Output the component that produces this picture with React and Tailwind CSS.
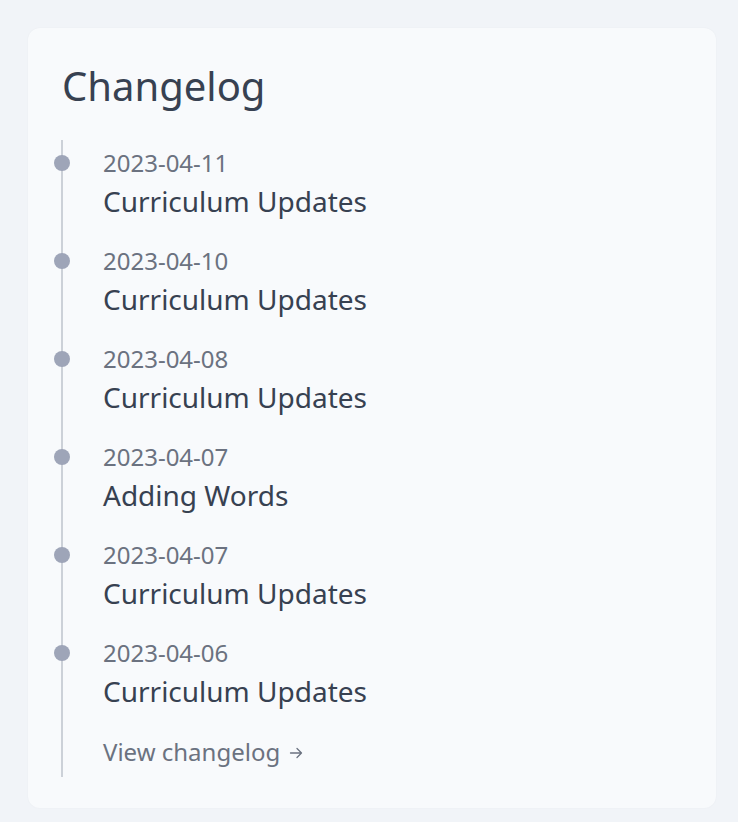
const entries = [
  { date: '2023-04-11', title: 'Curriculum Updates' },
  { date: '2023-04-10', title: 'Curriculum Updates' },
  { date: '2023-04-08', title: 'Curriculum Updates' },
  { date: '2023-04-07', title: 'Adding Words' },
  { date: '2023-04-07', title: 'Curriculum Updates' },
  { date: '2023-04-06', title: 'Curriculum Updates' },
]

export default function App() {
  return (
    <div className="min-h-screen bg-[#f1f4f8] pt-[28px] pl-[28px]"
      style={{ fontFamily: '"Noto Sans", "Open Sans", sans-serif' }}>
      <div className="w-[688px] rounded-xl bg-[#f8fafc] pt-[34px] pb-[31px] px-[33px] shadow-[0_0_2px_rgba(15,23,42,0.04)]">
        <h2 className="text-[40px] leading-[48px] text-[#374151] pl-[1px]">Changelog</h2>

        <div className="mt-[30px] border-l-2 border-[#ccd1d8] pt-[8px] pb-[10px] pl-[40px]">
          <ul className="flex flex-col gap-[27px]">
            {entries.map((e, i) => (
              <li key={i} className="relative">
                <span className="absolute left-[-49px] top-[7px] w-4 h-4 rounded-full bg-[#9ea5b8]" />
                <div className="text-[24px] leading-[30px] text-[#6b7280]">{e.date}</div>
                <div className="mt-[5px] text-[28px] leading-[36px] text-[#374151]">{e.title}</div>
              </li>
            ))}
          </ul>

          <a href="#" className="mt-[28px] inline-flex items-center gap-[9px] text-[24px] leading-[30px] text-[#6b7280]">
            View changelog
            <svg width="14" height="14" viewBox="0 0 14 14" fill="none" stroke="currentColor"
              strokeWidth="1.3" strokeLinecap="round" strokeLinejoin="round" className="mt-[2px]">
              <path d="M1.5 7h11M8 2.5 12.5 7 8 11.5" />
            </svg>
          </a>
        </div>
      </div>
    </div>
  )
}
